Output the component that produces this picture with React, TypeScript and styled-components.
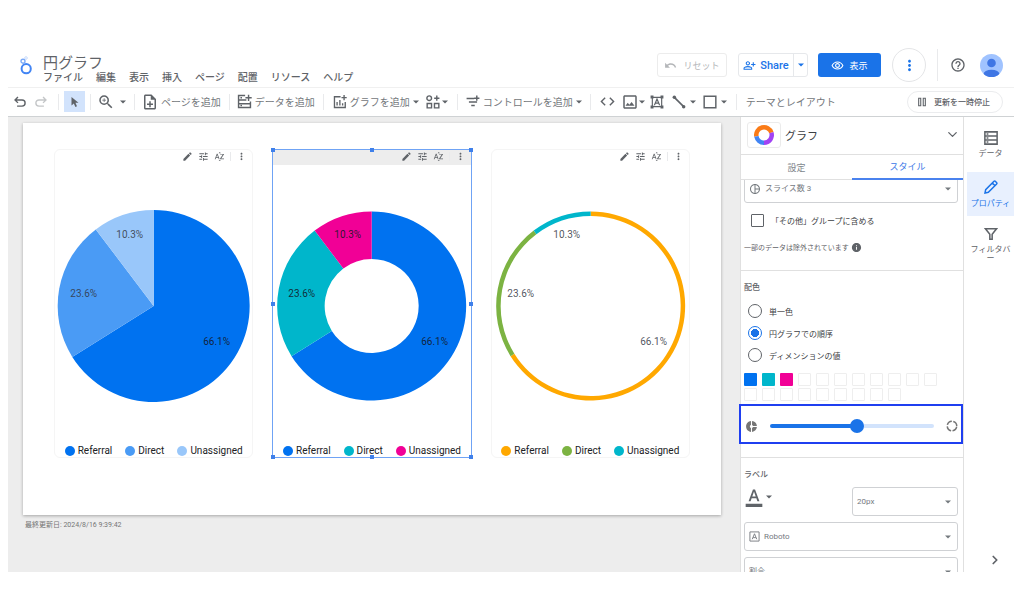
import React from "react";
import styled, { createGlobalStyle, css } from "styled-components";
import {
  MdCode,
  MdDonutSmall,
  MdEdit,
  MdFormatColorText,
  MdHelpOutline,
  MdInfo,
  MdMoreVert,
  MdOutlineImage,
  MdOutlineNoteAdd,
  MdOutlinePersonAddAlt,
  MdOutlineRemoveRedEye,
  MdPieChartOutline,
  MdSortByAlpha,
  MdTune,
  MdUndo,
  MdZoomIn,
} from "react-icons/md";
import { ChevronDown, ChevronRight } from "lucide-react";

const GlobalStyle = createGlobalStyle`
  *, *::before, *::after { box-sizing: border-box; }
  body {
    margin: 0;
    background: #fff;
    color: #5f6368;
    font-family: Roboto, "Noto Sans CJK JP", sans-serif;
    font-size: 10px;
  }
  button, input, select { font: inherit; color: inherit; margin: 0; }
  svg { display: block; flex: none; }
`;

/* ---------- shell ---------- */

const Shell = styled.div`
  display: flex;
  flex-direction: column;
  height: 100vh;
  padding: 48px 10px 42px 8px;
`;

const plainButton = css`
  display: inline-flex;
  align-items: center;
  padding: 0;
  border: 0;
  background: none;
  white-space: nowrap;
  cursor: pointer;
`;

/* ---------- header ---------- */

const Header = styled.header`
  display: flex;
  align-items: flex-start;
  padding: 0 11px 3px 12px;
`;

const LogoLink = styled.a`
  width: 13px;
  margin: 8px 10px 0 0;
`;

const TitleBlock = styled.div`
  flex: 1;
  padding-top: 6px;
`;

const Title = styled.h1`
  margin: 0;
  font-size: 15px;
  line-height: 18px;
  font-weight: 400;
`;

const MenuBar = styled.nav`
  display: flex;
  gap: 13px;
`;

const MenuButton = styled.button`
  ${plainButton}
  line-height: 12px;
  font-weight: 500;
`;

const HeaderActions = styled.div`
  display: flex;
  align-items: center;
  height: 34px;
  font-size: 9px;
`;

const ResetButton = styled.button`
  ${plainButton}
  justify-content: center;
  gap: 6px;
  width: 70px;
  height: 24px;
  border: 1px solid #ececec;
  border-radius: 3px;
  color: #b4b6b9;
`;

const ShareGroup = styled.div`
  display: flex;
  width: 70px;
  height: 24px;
  margin: 0 10px 0 11px;
  border: 1px solid #e6e8eb;
  border-radius: 3px;
  color: #1a73e8;
`;

const ShareButton = styled.button`
  ${plainButton}
  flex: 1;
  justify-content: center;
  gap: 4px;
  font-size: 11px;
  font-weight: 500;
`;

const ShareMore = styled.button`
  ${plainButton}
  justify-content: center;
  width: 14px;
  border-left: 1px solid #e6e8eb;
`;

const ViewButton = styled.button`
  ${plainButton}
  justify-content: center;
  gap: 5px;
  width: 63px;
  height: 24px;
  border-radius: 3px;
  background: #1a73e8;
  color: #fff;
`;

const RoundButton = styled.button`
  ${plainButton}
  justify-content: center;
  width: 34px;
  height: 34px;
  margin: 0 11px;
  border: 1px solid #e4e5e7;
  border-radius: 50%;
  color: #1a73e8;
`;

const HelpButton = styled.button`
  ${plainButton}
  margin: 0 14px 0 12px;
`;

const AvatarButton = styled.button`
  ${plainButton}
`;

const Separator = styled.span<{ $height: number }>`
  width: 1px;
  height: ${(p) => p.$height}px;
  background: #e9eaec;
`;

/* ---------- toolbar ---------- */

const Toolbar = styled.div`
  display: flex;
  align-items: center;
  height: 30px;
  padding-bottom: 1px;
  border-top: 1px solid #f0f0f0;
  border-bottom: 1px solid #cfd2d4;
`;

const ToolGroup = styled.div<{ $gap?: number; $pad?: string }>`
  display: flex;
  align-items: center;
  gap: ${(p) => p.$gap ?? 7}px;
  padding: ${(p) => p.$pad ?? "0 9px"};
`;

const ToolButton = styled.button<{ $gap?: number; $faded?: boolean }>`
  ${plainButton}
  gap: ${(p) => p.$gap ?? 3}px;
  ${(p) => p.$faded && "color: #c4c6c8;"}
`;

const ToolText = styled.span`
  color: #73777b;
`;

const PointerButton = styled.button`
  ${plainButton}
  justify-content: center;
  width: 21px;
  height: 21px;
  background: #d2e3fc;
`;

const PauseButton = styled.button`
  ${plainButton}
  gap: 7px;
  height: 22px;
  margin: 0 11px 0 auto;
  padding: 0 12px 0 9px;
  border: 1px solid #ebecee;
  border-radius: 11px;
  font-size: 8px;
  font-weight: 500;
`;

/* ---------- workspace ---------- */

const Workspace = styled.div`
  display: flex;
  flex: 1;
  min-height: 0;
`;

const CanvasArea = styled.main`
  flex: 1;
  min-width: 0;
  padding: 6px 19px 0 15px;
  background: #ededed;
`;

const ReportPage = styled.section`
  display: grid;
  grid-template-columns: repeat(3, minmax(0, 1fr));
  gap: 19px;
  padding: 26px 31px 57px;
  background: #fff;
  box-shadow: 0 1px 3px rgba(0, 0, 0, 0.3);
`;

const UpdatedAt = styled.p`
  margin: 5px 2px 0;
  font-size: 7px;
  line-height: 10px;
  color: #757575;
`;

const Card = styled.article<{ $selected?: boolean }>`
  position: relative;
  border: 1px solid ${(p) => (p.$selected ? "#6fa3f5" : "#f5f5f5")};
  border-radius: ${(p) => (p.$selected ? 0 : 6)}px;
`;

const CardTools = styled.div<{ $selected?: boolean }>`
  display: flex;
  align-items: center;
  justify-content: flex-end;
  gap: 5px;
  height: 15px;
  padding: 0 5px 2px 0;
  background: ${(p) => (p.$selected ? "#ededed" : "transparent")};
`;

const CardTool = styled.button`
  ${plainButton}
`;

const Chart = styled.svg`
  width: 100%;
  height: 196px;
  margin-top: 43px;
`;

const SliceLabel = styled.text<{ $strong?: boolean }>`
  font-size: 10px;
  text-anchor: middle;
  dominant-baseline: central;
  fill: ${(p) => (p.$strong ? "rgba(20, 24, 40, 0.9)" : "rgba(50, 54, 66, 0.85)")};
`;

const Legend = styled.ul`
  display: flex;
  justify-content: center;
  gap: 13px;
  margin: 41px 0 0;
  padding: 0;
  list-style: none;
  line-height: 12px;
  color: #202124;
`;

const LegendItem = styled.li`
  display: flex;
  align-items: center;
  gap: 3px;
`;

const LegendDot = styled.span<{ $color: string }>`
  width: 10px;
  height: 10px;
  border-radius: 50%;
  background: ${(p) => p.$color};
`;

const Handle = styled.i<{ $x: number; $y: number }>`
  position: absolute;
  left: ${(p) => p.$x}%;
  top: ${(p) => p.$y}%;
  width: 4px;
  height: 4px;
  margin: -2px;
  background: #3f80ea;
`;

/* ---------- properties panel ---------- */

const Panel = styled.aside`
  display: flex;
  flex-direction: column;
  width: 224px;
  border: solid #e0e0e0;
  border-width: 0 1px;
`;

const PanelHeader = styled.div`
  display: flex;
  align-items: center;
  gap: 4px;
  height: 38px;
  padding: 0 3px 2px 6px;
  border-bottom: 1px solid #e0e0e0;
`;

const ChartTypeButton = styled.button`
  ${plainButton}
  justify-content: center;
  width: 34px;
  height: 26px;
  border: 1px solid #ebebeb;
  border-radius: 3px;
`;

const PanelTitle = styled.h2`
  flex: 1;
  margin: 0;
  font-size: 11px;
  font-weight: 400;
  color: #3c4043;
`;

const IconButton = styled.button`
  ${plainButton}
`;

const Tabs = styled.div`
  display: grid;
  grid-template-columns: 1fr 1fr;
  height: 25px;
`;

const Tab = styled.button<{ $active?: boolean }>`
  ${plainButton}
  justify-content: center;
  font-size: 9px;
  color: ${(p) => (p.$active ? "#3b78e7" : "#80868b")};
  border-bottom: ${(p) => (p.$active ? "2px solid #4a82ee" : "1px solid #e0e0e0")};
`;

const PanelBody = styled.div`
  flex: 1;
  min-height: 0;
  margin-left: -2px;
  padding-left: 2px;
  overflow: hidden;
  font-size: 8px;
`;

const PanelScroll = styled.div`
  margin-top: -6px;
`;

const Section = styled.section<{ $top: number; $bottom: number }>`
  padding: ${(p) => p.$top}px 5px ${(p) => p.$bottom}px 3px;
  & + & {
    border-top: 1px solid #e0e0e0;
  }
`;

const SectionTitle = styled.h3`
  margin: 0 0 6px;
  font-size: 8px;
  line-height: 12px;
  font-weight: 500;
`;

const SelectBox = styled.label<{ $width?: number }>`
  display: flex;
  align-items: center;
  gap: 4px;
  width: ${(p) => (p.$width ? `${p.$width}px` : "100%")};
  height: 29px;
  padding: 0 6px 0 4px;
  border: 1px solid #cfd1d4;
  border-radius: 3px;
  color: #757a7f;
`;

const Select = styled.select`
  flex: 1;
  min-width: 0;
  padding: 0;
  border: 0;
  background: none;
  appearance: none;
`;

const CheckRow = styled.label`
  display: flex;
  align-items: center;
  gap: 7px;
  height: 14px;
  margin-top: 10px;
  padding-left: 7px;
  color: #3c4043;
`;

const Checkbox = styled.input`
  appearance: none;
  width: 13px;
  height: 13px;
  border: 1px solid #5f6368;
  border-radius: 1px;
`;

const Note = styled.p`
  display: flex;
  align-items: center;
  gap: 2px;
  margin: 15px 0 0;
  height: 10px;
  font-size: 7px;
`;

const RadioRow = styled.label`
  display: flex;
  align-items: center;
  gap: 7px;
  height: 22px;
  padding-left: 4px;
  color: #3c4043;
`;

const Radio = styled.input`
  appearance: none;
  width: 14px;
  height: 14px;
  border: 1px solid #5f6368;
  border-radius: 50%;
  &:checked {
    border-color: #1a73e8;
    background: radial-gradient(circle, #1a73e8 0 4px, transparent 4px);
  }
`;

const Swatches = styled.div`
  display: grid;
  grid-template-columns: repeat(11, 13px);
  gap: 2px 5px;
  margin-top: 7px;
`;

const Swatch = styled.button<{ $color?: string }>`
  height: 13px;
  padding: 0;
  border: ${(p) => (p.$color ? "0" : "1px solid #eeeeee")};
  border-radius: 1px;
  background: ${(p) => p.$color ?? "transparent"};
`;

const SliderBox = styled.div`
  display: flex;
  align-items: center;
  gap: 12px;
  height: 40px;
  margin: 3px -5px 0;
  padding: 4px 3px 0 4px;
  border: 2px solid #1f3ff0;
  color: #757575;
`;

const Slider = styled.input`
  flex: 1;
  min-width: 0;
  height: 14px;
  appearance: none;
  background: none;
  &::-webkit-slider-runnable-track {
    height: 4px;
    border-radius: 2px;
    background: linear-gradient(to right, #1a73e8 53%, #d2e3fc 53%);
  }
  &::-webkit-slider-thumb {
    appearance: none;
    width: 14px;
    height: 14px;
    margin-top: -5px;
    border-radius: 50%;
    background: #1a73e8;
  }
`;

const LabelRow = styled.div`
  display: flex;
  justify-content: space-between;
  align-items: flex-start;
`;

const ColorButton = styled.button`
  ${plainButton}
  gap: 2px;
  height: 20px;
`;

const SelectStack = styled.div`
  display: grid;
  gap: 6px;
  margin-top: 6px;
`;

/* ---------- rail ---------- */

const Rail = styled.nav`
  display: flex;
  flex-direction: column;
  gap: 4px;
  width: 50px;
  padding: 7px 0 5px 3px;
`;

const RailButton = styled.button<{ $active?: boolean }>`
  ${plainButton}
  flex-direction: column;
  gap: 4px;
  height: 44px;
  padding: 7px 3px 0;
  font-size: 8px;
  line-height: 9px;
  white-space: normal;
  line-break: anywhere;
  color: ${(p) => (p.$active ? "#1a73e8" : "#5f6368")};
  background: ${(p) => (p.$active ? "#e8f0fe" : "transparent")};
`;

const CollapseButton = styled.button`
  ${plainButton}
  margin: auto 12px 0 auto;
`;

/* ---------- drawings ---------- */

const Caret = () => (
  <svg width="6" height="4" viewBox="0 0 6 4" aria-hidden="true">
    <path d="M0 .4h6L3 3.6z" fill="currentColor" />
  </svg>
);

type GlyphProps = { size?: number; width?: number; children: React.ReactNode };

const Glyph = ({ size = 14, width = 2, children }: GlyphProps) => (
  <svg
    width={size}
    height={size}
    viewBox="0 0 24 24"
    fill="none"
    stroke="currentColor"
    strokeWidth={width}
    aria-hidden="true"
  >
    {children}
  </svg>
);

const UndoGlyph = () => (
  <Glyph width={2.4}>
    <path d="M8.5 3.5 3.5 8.5l5 5M4 8.5h11.5a5.2 5.2 0 0 1 0 10.5H7" />
  </Glyph>
);

const RedoGlyph = () => (
  <Glyph width={2.4}>
    <path d="m15.5 3.5 5 5-5 5M20 8.5H8.5a5.2 5.2 0 0 0 0 10.5H17" />
  </Glyph>
);

const PointerGlyph = () => (
  <Glyph size={12}>
    <path d="M5 2v17l4.6-4.2 3.2 7.2 3.2-1.4-3.100-7H19z" fill="currentColor" stroke="none" />
  </Glyph>
);

const AddDataGlyph = () => (
  <Glyph size={15} width={2.3}>
    <path d="M13 2.500H2.500v7H15M2.500 9.500v6M2.500 15.500h19v6h-19zM21.500 15.500V12M18.500 1v10M13.500 6h10" />
    <path d="M5.500 6h2.500M5.500 18.500h2.500" />
  </Glyph>
);

const AddChartGlyph = () => (
  <Glyph width={2.3}>
    <path d="M13 3H2.500v18.500H21V12M7 18v-6M11.800 18V8.500M16.500 18v-4M19 0v9M14.500 4.500h9" />
  </Glyph>
);

const WidgetsGlyph = () => (
  <Glyph width={2.4}>
    <circle cx="5.500" cy="5.500" r="4" />
    <path d="M18.500 1v9M14 5.500h9M2 14.500h7.500V22H2zM14.500 14.500H22V22h-7.500z" />
  </Glyph>
);

const AddControlGlyph = () => (
  <Glyph width={2.5}>
    <path d="M1 6h13M5 12h14M9 18h6M18.500 1v9M14 5.500h9" />
  </Glyph>
);

const TextBoxGlyph = () => (
  <Glyph width={2}>
    <path d="M4 4h16v16H4zM7.500 17.500 12 7l4.500 10.500M9.200 14h5.600" />
    <path
      d="M1 1h5v5H1zM18 1h5v5h-5zM1 18h5v5H1zM18 18h5v5h-5z"
      fill="currentColor"
      stroke="none"
    />
  </Glyph>
);

const LineGlyph = () => (
  <Glyph width={2.8}>
    <path d="m4 4 16 16" />
    <circle cx="4" cy="4" r="3" fill="currentColor" stroke="none" />
    <circle cx="20" cy="20" r="3" fill="currentColor" stroke="none" />
  </Glyph>
);

const SquareGlyph = () => (
  <Glyph width={2.5}>
    <path d="M2 2h20v20H2z" />
  </Glyph>
);

const PauseGlyph = () => (
  <Glyph size={10} width={2.6}>
    <path d="M4 3h5v18H4zM15 3h5v18h-5z" />
  </Glyph>
);

const FontGlyph = () => (
  <Glyph size={11}>
    <path d="M2 2h20v20H2zM7 18l5-12 5 12M9 14.500h6" />
  </Glyph>
);

const DataGlyph = () => (
  <Glyph size={14} width={2.6}>
    <path d="M1.500 1.500h21v21h-21zM1.500 8.500h21M1.500 15.500h21" />
    <path d="M4.500 5h3M4.500 12h3M4.500 19h3" />
  </Glyph>
);

const PencilGlyph = () => (
  <Glyph size={16} width={2.2}>
    <path d="M3 21l1-5L16.500 3.500q1-1 2 0l2 2q1 1 0 2L8 20zM14 6l4 4" />
  </Glyph>
);

const FilterGlyph = () => (
  <Glyph size={14} width={2.6}>
    <path d="M2.500 3h19L14 12.500V21h-4v-8.500z" />
  </Glyph>
);

const ThinRingGlyph = () => (
  <Glyph size={12} width={3}>
    <circle cx="12" cy="12" r="9.500" strokeDasharray="11.920 3" strokeDashoffset="-1.500" />
  </Glyph>
);

const Logo = () => (
  <svg width="13" height="20" viewBox="0 0 13 20" aria-hidden="true">
    <circle cx="6.200" cy="12.700" r="4.600" fill="none" stroke="#4285f4" strokeWidth="2" />
    <circle cx="3" cy="5.200" r="2" fill="none" stroke="#7baaf7" strokeWidth="1.400" />
    <circle cx="6" cy="2" r="1.300" fill="none" stroke="#c6dafc" strokeWidth="1" />
  </svg>
);

const Avatar = () => (
  <svg width="23" height="23" viewBox="0 0 23 23" aria-hidden="true">
    <clipPath id="avatar-disc">
      <circle cx="11.500" cy="11.500" r="11.500" />
    </clipPath>
    <g clipPath="url(#avatar-disc)">
      <path d="M0 0h23v23H0z" fill="#a0c3ff" />
      <circle cx="11.500" cy="9" r="4.300" fill="#3f76e4" />
      <ellipse cx="11.500" cy="20.500" rx="8" ry="4.800" fill="#3f76e4" />
    </g>
  </svg>
);

/* Ring or pie segment between two shares of the full turn, clockwise from the top. */
function slicePath(from: number, to: number, outer: number, inner: number) {
  const at = (share: number, r: number) => {
    const a = share * 2 * Math.PI;
    return `${(Math.sin(a) * r).toFixed(2)} ${(-Math.cos(a) * r).toFixed(2)}`;
  };
  const large = to - from > 0.5 ? 1 : 0;
  return `M${at(from, outer)}A${outer} ${outer} 0 ${large} 1 ${at(to, outer)}L${at(to, inner)}${
    inner ? `A${inner} ${inner} 0 ${large} 0 ${at(from, inner)}` : ""
  }Z`;
}

const ChartTypeGlyph = () => (
  <svg width="20" height="20" viewBox="-10 -10 20 20" aria-hidden="true">
    <path d={slicePath(0.72, 1.2, 10, 5.5)} fill="#fa7b17" />
    <path d={slicePath(0.2, 0.5, 10, 5.5)} fill="#a142f4" />
    <path d={slicePath(0.5, 0.72, 10, 5.5)} fill="#4285f4" />
  </svg>
);

/* ---------- data ---------- */

const SLICES = [
  { name: "Referral", share: 0.661, text: "66.1%", x: 63, y: 35 },
  { name: "Direct", share: 0.236, text: "23.6%", x: -70, y: -13 },
  { name: "Unassigned", share: 0.103, text: "10.3%", x: -24, y: -72 },
];

type ChartSpec = { colors: string[]; outer: number; inner: number; selected?: boolean };

const CHARTS: ChartSpec[] = [
  { colors: ["#0072f0", "#4a9bf5", "#99c7fa"], outer: 96, inner: 0 },
  { colors: ["#0072f0", "#00b6cb", "#f10096"], outer: 94.5, inner: 47, selected: true },
  { colors: ["#ffa800", "#7cb342", "#00b6cb"], outer: 94.5, inner: 90 },
];

const HANDLES = [
  [0, 0],
  [50, 0],
  [100, 0],
  [0, 50],
  [100, 50],
  [0, 100],
  [50, 100],
  [100, 100],
];

const MENUS = ["ファイル", "編集", "表示", "挿入", "ページ", "配置", "リソース", "ヘルプ"];

const SWATCHES: (string | undefined)[] = ["#0072f0", "#00b6cb", "#f10096", ...Array(17).fill(undefined)];

function PieCard({ colors, outer, inner, selected }: ChartSpec) {
  let start = 0;
  return (
    <Card $selected={selected}>
      <CardTools $selected={selected}>
        <CardTool aria-label="編集"><MdEdit size={11} /></CardTool>
        <CardTool aria-label="調整"><MdTune size={11} /></CardTool>
        <CardTool aria-label="並べ替え"><MdSortByAlpha size={11} /></CardTool>
        <Separator $height={9} />
        <CardTool aria-label="その他"><MdMoreVert size={11} /></CardTool>
      </CardTools>
      <Chart viewBox="-98 -98 196 196" role="img" aria-label="円グラフ">
        {SLICES.map((slice, i) => {
          const from = start;
          start += slice.share;
          return <path key={slice.name} d={slicePath(from, start, outer, inner)} fill={colors[i]} />;
        })}
        {SLICES.map((slice, i) => (
          <SliceLabel
            key={slice.name}
            x={slice.x}
            y={slice.y}
            $strong={inner < 90 && (i === 0 || selected)}
          >
            {slice.text}
          </SliceLabel>
        ))}
      </Chart>
      <Legend>
        {SLICES.map((slice, i) => (
          <LegendItem key={slice.name}>
            <LegendDot $color={colors[i]} />
            {slice.name}
          </LegendItem>
        ))}
      </Legend>
      {selected && HANDLES.map(([x, y]) => <Handle key={`${x}-${y}`} $x={x} $y={y} />)}
    </Card>
  );
}

type DropdownProps = { label: string; value: string; width?: number; icon?: React.ReactNode };

const Dropdown = ({ label, value, width, icon }: DropdownProps) => (
  <SelectBox $width={width}>
    {icon}
    <Select aria-label={label}>
      <option>{value}</option>
    </Select>
    <Caret />
  </SelectBox>
);

export default function App() {
  return (
    <Shell>
      <GlobalStyle />
      <Header>
        <LogoLink href="#" aria-label="ホーム"><Logo /></LogoLink>
        <TitleBlock>
          <Title>円グラフ</Title>
          <MenuBar>
            {MENUS.map((name) => (
              <MenuButton key={name}>{name}</MenuButton>
            ))}
          </MenuBar>
        </TitleBlock>
        <HeaderActions>
          <ResetButton><MdUndo size={13} />リセット</ResetButton>
          <ShareGroup>
            <ShareButton><MdOutlinePersonAddAlt size={13} />Share</ShareButton>
            <ShareMore aria-label="共有オプション"><Caret /></ShareMore>
          </ShareGroup>
          <ViewButton><MdOutlineRemoveRedEye size={13} />表示</ViewButton>
          <RoundButton aria-label="その他のオプション"><MdMoreVert size={17} /></RoundButton>
          <Separator $height={32} />
          <HelpButton aria-label="ヘルプ"><MdHelpOutline size={16} /></HelpButton>
          <AvatarButton aria-label="アカウント"><Avatar /></AvatarButton>
        </HeaderActions>
      </Header>

      <Toolbar>
        <ToolGroup $pad="0 10px 0 5px">
          <ToolButton aria-label="元に戻す"><UndoGlyph /></ToolButton>
          <ToolButton aria-label="やり直す" $faded><RedoGlyph /></ToolButton>
        </ToolGroup>
        <Separator $height={16} />
        <ToolGroup $pad="0 5px">
          <PointerButton aria-label="選択"><PointerGlyph /></PointerButton>
        </ToolGroup>
        <Separator $height={16} />
        <ToolGroup $pad="0 8px 0 6px">
          <ToolButton aria-label="拡大" $gap={5}><MdZoomIn size={18} /><Caret /></ToolButton>
        </ToolGroup>
        <Separator $height={16} />
        <ToolGroup $pad="0 8px 0 6px">
          <ToolButton $gap={2}><MdOutlineNoteAdd size={18} /><ToolText>ページを追加</ToolText></ToolButton>
        </ToolGroup>
        <Separator $height={16} />
        <ToolGroup $pad="0 8px 0 7px">
          <ToolButton><AddDataGlyph /><ToolText>データを追加</ToolText></ToolButton>
        </ToolGroup>
        <Separator $height={16} />
        <ToolGroup>
          <ToolButton><AddChartGlyph /><ToolText>グラフを追加</ToolText><Caret /></ToolButton>
          <ToolButton aria-label="ウィジェット" $gap={2}><WidgetsGlyph /><Caret /></ToolButton>
        </ToolGroup>
        <Separator $height={16} />
        <ToolGroup $pad="0 8px">
          <ToolButton><AddControlGlyph /><ToolText>コントロールを追加</ToolText><Caret /></ToolButton>
        </ToolGroup>
        <Separator $height={16} />
        <ToolGroup $gap={5} $pad="0 8px">
          <ToolButton aria-label="埋め込み"><MdCode size={17} /></ToolButton>
          <ToolButton aria-label="画像" $gap={0}><MdOutlineImage size={18} /><Caret /></ToolButton>
          <ToolButton aria-label="テキスト"><TextBoxGlyph /></ToolButton>
        </ToolGroup>
        <ToolGroup $pad="0 9px 0 0">
          <ToolButton aria-label="線" $gap={4}><LineGlyph /><Caret /></ToolButton>
          <ToolButton aria-label="図形" $gap={4}><SquareGlyph /><Caret /></ToolButton>
        </ToolGroup>
        <Separator $height={16} />
        <ToolGroup>
          <ToolButton><ToolText>テーマとレイアウト</ToolText></ToolButton>
        </ToolGroup>
        <PauseButton><PauseGlyph />更新を一時停止</PauseButton>
      </Toolbar>

      <Workspace>
        <CanvasArea>
          <ReportPage>
            {CHARTS.map((chart, i) => (
              <PieCard key={i} {...chart} />
            ))}
          </ReportPage>
          <UpdatedAt>最終更新日: 2024/8/16 9:39:42</UpdatedAt>
        </CanvasArea>

        <Panel>
          <PanelHeader>
            <ChartTypeButton aria-label="グラフの種類"><ChartTypeGlyph /></ChartTypeButton>
            <PanelTitle>グラフ</PanelTitle>
            <IconButton aria-label="折りたたむ"><ChevronDown size={15} /></IconButton>
          </PanelHeader>
          <Tabs role="tablist">
            <Tab role="tab" aria-selected="false">設定</Tab>
            <Tab role="tab" aria-selected="true" $active>スタイル</Tab>
          </Tabs>
          <PanelBody>
            <PanelScroll>
              <Section $top={0} $bottom={18}>
                <Dropdown label="スライス数" value="スライス数 3" icon={<MdPieChartOutline size={12} />} />
                <CheckRow>
                  <Checkbox type="checkbox" />
                  「その他」グループに含める
                </CheckRow>
                <Note>
                  一部のデータは除外されています
                  <MdInfo size={11} />
                </Note>
              </Section>
              <Section $top={11} $bottom={13}>
                <SectionTitle>配色</SectionTitle>
                <RadioRow><Radio type="radio" name="coloring" />単一色</RadioRow>
                <RadioRow><Radio type="radio" name="coloring" defaultChecked />円グラフでの順序</RadioRow>
                <RadioRow><Radio type="radio" name="coloring" />ディメンションの値</RadioRow>
                <Swatches>
                  {SWATCHES.map((color, i) => (
                    <Swatch key={i} $color={color} aria-label={`色 ${i + 1}`} />
                  ))}
                </Swatches>
                <SliderBox>
                  <MdDonutSmall size={13} />
                  <Slider type="range" min={0} max={100} defaultValue={53} aria-label="ドーナツの穴" />
                  <ThinRingGlyph />
                </SliderBox>
              </Section>
              <Section $top={11} $bottom={18}>
                <SectionTitle>ラベル</SectionTitle>
                <LabelRow>
                  <ColorButton aria-label="文字の色"><MdFormatColorText size={20} /><Caret /></ColorButton>
                  <Dropdown label="文字サイズ" value="20px" width={106} />
                </LabelRow>
                <SelectStack>
                  <Dropdown label="フォント" value="Roboto" icon={<FontGlyph />} />
                  <Dropdown label="スライスラベル" value="割合" />
                </SelectStack>
              </Section>
            </PanelScroll>
          </PanelBody>
        </Panel>

        <Rail>
          <RailButton><DataGlyph />データ</RailButton>
          <RailButton $active><PencilGlyph />プロパティ</RailButton>
          <RailButton><FilterGlyph />フィルタバー</RailButton>
          <CollapseButton aria-label="パネルを閉じる"><ChevronRight size={14} strokeWidth={3} /></CollapseButton>
        </Rail>
      </Workspace>
    </Shell>
  );
}
